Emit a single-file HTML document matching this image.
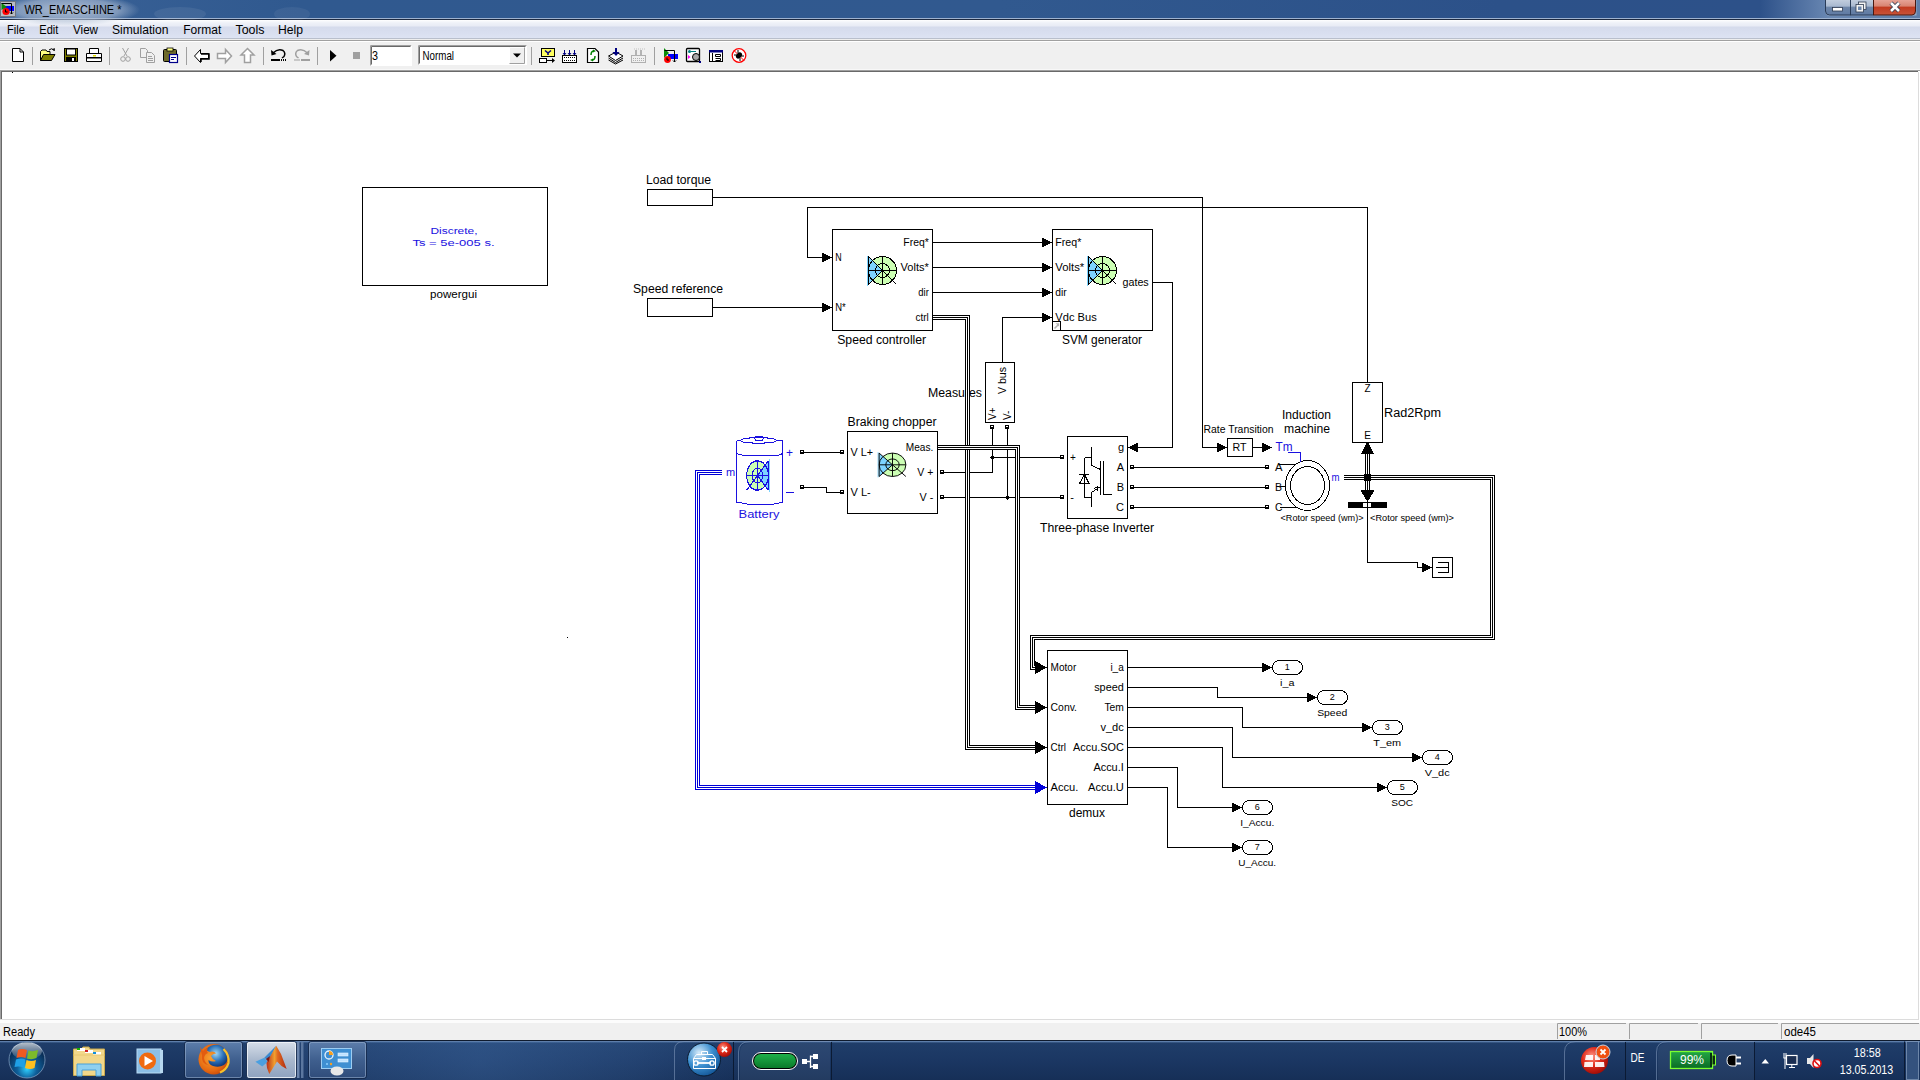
<!DOCTYPE html>
<html><head><meta charset="utf-8"><style>
html,body{margin:0;padding:0;width:1920px;height:1080px;overflow:hidden;background:#fff;font-family:"Liberation Sans", sans-serif;}
.a{position:absolute;}
svg text{font-family:"Liberation Sans", sans-serif;}
</style></head><body>
<!-- title bar -->
<div class="a" style="left:0;top:0;width:1920px;height:18px;background:linear-gradient(90deg,#3a6297 0px,#30598f 300px,#31598f 1000px,#2c5189 1500px,#2d5189 1760px,#6a88b3 1830px,#5f7faa 1920px);"></div>
<div class="a" style="left:0;top:18px;width:1920px;height:1px;background:#9fb3d0;"></div>
<div class="a" style="left:0;top:19px;width:1920px;height:1px;background:#1e2a40;"></div>
<!-- menu bar -->
<div class="a" style="left:0;top:20px;width:1920px;height:18px;background:linear-gradient(180deg,#ffffff 0px,#f8f9fc 1px,#eef1f8 3px,#e8ebf5 6px,#d5dbec 7px,#d8deef 12px,#dde3f3 18px);"></div>
<div class="a" style="left:0;top:38px;width:1920px;height:1px;background:#b9bfcc;"></div>
<div class="a" style="left:0;top:39px;width:1920px;height:1px;background:#eeeeee;"></div>
<div class="a" style="left:0;top:40px;width:1920px;height:1px;background:#a0a0a0;"></div>
<div class="a" style="left:0;top:41px;width:1920px;height:1px;background:#ffffff;"></div>
<!-- toolbar -->
<div class="a" style="left:0;top:42px;width:1920px;height:28px;background:#f0f0f0;"></div>
<div class="a" style="left:0;top:69px;width:1920px;height:1px;background:#f8f8f8;"></div>
<div class="a" style="left:0;top:70px;width:1920px;height:1px;background:#a0a0a0;"></div>
<div class="a" style="left:0;top:71px;width:1918px;height:1px;background:#696969;"></div>
<!-- canvas -->
<div class="a" style="left:0;top:71px;width:1px;height:949px;background:#a0a0a0;"></div>
<div class="a" style="left:1px;top:71px;width:1px;height:949px;background:#696969;"></div>
<div class="a" style="left:12px;top:72px;width:1px;height:1px;background:#000;"></div>
<div class="a" style="left:567px;top:637px;width:1px;height:1px;background:#000;"></div>
<div class="a" style="left:1918px;top:72px;width:1px;height:948px;background:#dcdcdc;"></div>
<div class="a" style="left:0;top:1019px;width:1919px;height:1px;background:#dcdcdc;"></div>
<!-- status bar -->
<div class="a" style="left:0;top:1020px;width:1920px;height:20px;background:#f0f0f0;"></div>
<div class="a" style="left:0;top:1020px;width:1920px;height:3px;background:#fcfcfc;"></div>
<!-- taskbar -->
<div class="a" style="left:0;top:1040px;width:1920px;height:40px;background:linear-gradient(180deg,#0f1b2e 0px,#0f1b2e 1px,#6f8fba 1px,#4a6c9a 2px,#1f3d69 3px,#1b3763 20px,#162f57 40px);"></div>
<svg class="a" style="left:0;top:0" width="1920" height="1080" shape-rendering="auto">
<defs>
<linearGradient id="gTitleGlow" x1="0" y1="0" x2="1" y2="0">
 <stop offset="0" stop-color="#fff" stop-opacity="0.45"/><stop offset="1" stop-color="#fff" stop-opacity="0"/>
</linearGradient>
<radialGradient id="gTitleGlowR" cx="0.5" cy="0.5" r="0.5">
 <stop offset="0" stop-color="#c4cfdf" stop-opacity="0.85"/><stop offset="0.7" stop-color="#b0bfd5" stop-opacity="0.6"/><stop offset="1" stop-color="#b0bfd5" stop-opacity="0"/>
</radialGradient>
<radialGradient id="gTaskGlow" cx="480" cy="1062" r="260" gradientUnits="userSpaceOnUse">
 <stop offset="0" stop-color="#4a7ab8" stop-opacity="0.35"/><stop offset="0.6" stop-color="#4a7ab8" stop-opacity="0.18"/><stop offset="1" stop-color="#4a7ab8" stop-opacity="0"/>
</radialGradient>
<linearGradient id="gBtn" x1="0" y1="0" x2="0" y2="1">
 <stop offset="0" stop-color="#c5d0e0"/><stop offset="0.45" stop-color="#a9b9d0"/><stop offset="0.5" stop-color="#6f87aa"/><stop offset="1" stop-color="#5f7aa3"/>
</linearGradient>
<linearGradient id="gClose" x1="0" y1="0" x2="0" y2="1">
 <stop offset="0" stop-color="#e8a89c"/><stop offset="0.45" stop-color="#d88472"/><stop offset="0.5" stop-color="#c23a20"/><stop offset="1" stop-color="#c8553a"/>
</linearGradient>
<linearGradient id="gTask" x1="0" y1="0" x2="0" y2="1">
 <stop offset="0" stop-color="#5d7eab"/><stop offset="0.5" stop-color="#3f5f8e"/><stop offset="1" stop-color="#2f4c7a"/>
</linearGradient>
<linearGradient id="gTaskAct" x1="0" y1="0" x2="0" y2="1">
 <stop offset="0" stop-color="#d7dfea"/><stop offset="0.5" stop-color="#a9b8cd"/><stop offset="1" stop-color="#8ea2bf"/>
</linearGradient>
<radialGradient id="gOrb" cx="0.5" cy="0.75" r="0.6">
 <stop offset="0" stop-color="#2fd0ff"/><stop offset="0.45" stop-color="#0e5f9a"/><stop offset="1" stop-color="#0a2d55"/>
</radialGradient>
<linearGradient id="gOrbTop" x1="0" y1="0" x2="0" y2="1">
 <stop offset="0" stop-color="#fff" stop-opacity="0.7"/><stop offset="1" stop-color="#fff" stop-opacity="0.05"/>
</linearGradient>
<radialGradient id="gFF" cx="0.45" cy="0.4" r="0.6">
 <stop offset="0" stop-color="#9fd8f5"/><stop offset="0.6" stop-color="#2a70b8"/><stop offset="1" stop-color="#123a7a"/>
</radialGradient>
<linearGradient id="gMat" x1="0" y1="0" x2="1" y2="0">
 <stop offset="0" stop-color="#b8301a"/><stop offset="0.4" stop-color="#f0a030"/><stop offset="0.55" stop-color="#e06a20"/><stop offset="1" stop-color="#b02a10"/>
</linearGradient>
<radialGradient id="gFFo" cx="0.4" cy="0.45" r="0.6">
 <stop offset="0" stop-color="#f8a030"/><stop offset="0.7" stop-color="#e66a12"/><stop offset="1" stop-color="#c84a0a"/>
</radialGradient>
<radialGradient id="gTool" cx="0.35" cy="0.3" r="0.8">
 <stop offset="0" stop-color="#d8ecfa"/><stop offset="0.5" stop-color="#3b8fd0"/><stop offset="1" stop-color="#0d4d8f"/>
</radialGradient>
<radialGradient id="gRed" cx="0.4" cy="0.35" r="0.7">
 <stop offset="0" stop-color="#ff9a8a"/><stop offset="0.5" stop-color="#e02a1a"/><stop offset="1" stop-color="#9a0a05"/>
</radialGradient>
<linearGradient id="gPill" x1="0" y1="0" x2="0" y2="1">
 <stop offset="0" stop-color="#1fb04a"/><stop offset="1" stop-color="#0a7a2a"/>
</linearGradient>
<linearGradient id="gBatt" x1="0" y1="0" x2="0" y2="1">
 <stop offset="0" stop-color="#23a845"/><stop offset="1" stop-color="#0b6a26"/>
</linearGradient>
</defs>
<ellipse cx="68" cy="10" rx="72" ry="16" fill="url(#gTitleGlowR)"/>
<ellipse cx="180" cy="14" rx="26" ry="7" fill="#fff" opacity="0.07"/><ellipse cx="292" cy="14" rx="18" ry="7" fill="#fff" opacity="0.06"/>
<rect x="0.5" y="1.5" width="15" height="15" fill="#b8bcc4" stroke="#6f757f"/>
<rect x="4" y="6" width="10" height="5" fill="#0000ff"/>
<polygon points="1.5,3 1.5,10 7,7" fill="#0a8a0a"/>
<path d="M1.5 3.5 H11.5 V14" stroke="#000" fill="none"/><path d="M10 12.5 L11.5 14 L13 12.5" stroke="#000" fill="none"/>
<circle cx="6" cy="11.5" r="3.6" fill="#ff0000"/><path d="M5.5 9.5 V12 H7.5" stroke="#000" fill="none"/>
<text x="24.5" y="14" font-size="12" fill="#000" text-anchor="start" font-weight="normal" textLength="97" lengthAdjust="spacingAndGlyphs" >WR_EMASCHINE *</text>
<path d="M1825.5 0 V12 Q1825.5 15.5 1829 15.5 H1916.5 Q1916.5 15.5 1916.5 12 V0" fill="#fff" opacity="0.35"/>
<path d="M1825.5 -1 V11 Q1825.5 15 1829.5 15 H1850.5 V-1 Z" fill="url(#gBtn)" stroke="#2a3c58"/>
<rect x="1850.5" y="-1" width="23" height="16" fill="url(#gBtn)" stroke="#2a3c58"/>
<path d="M1873.5 -1 V15 H1912 Q1915.5 15 1915.5 11 V-1 Z" fill="url(#gClose)" stroke="#4a1810"/>
<rect x="1832.5" y="7.5" width="10" height="3.5" fill="#fff" stroke="#2d3a50" stroke-width="0.8"/>
<rect x="1858.5" y="2" width="7.5" height="7.5" fill="#f4f4f4" stroke="#2d3a50" stroke-width="0.8"/>
<rect x="1856" y="4.5" width="7.5" height="7.5" fill="#f4f4f4" stroke="#2d3a50" stroke-width="0.8"/><rect x="1858" y="6.5" width="3.5" height="3.5" fill="#6d86aa"/>
<path d="M1891 3 L1899 11 M1899 3 L1891 11" stroke="#2d3a50" stroke-width="4.2"/><path d="M1891 3 L1899 11 M1899 3 L1891 11" stroke="#fff" stroke-width="2.6"/>
<text x="7" y="34" font-size="12" fill="#000" text-anchor="start" font-weight="normal" textLength="18" lengthAdjust="spacingAndGlyphs" >File</text>
<text x="39.3" y="34" font-size="12" fill="#000" text-anchor="start" font-weight="normal" textLength="19" lengthAdjust="spacingAndGlyphs" >Edit</text>
<text x="73" y="34" font-size="12" fill="#000" text-anchor="start" font-weight="normal" textLength="25" lengthAdjust="spacingAndGlyphs" >View</text>
<text x="112" y="34" font-size="12" fill="#000" text-anchor="start" font-weight="normal" textLength="56.5" lengthAdjust="spacingAndGlyphs" >Simulation</text>
<text x="183.3" y="34" font-size="12" fill="#000" text-anchor="start" font-weight="normal" textLength="38" lengthAdjust="spacingAndGlyphs" >Format</text>
<text x="235.5" y="34" font-size="12" fill="#000" text-anchor="start" font-weight="normal" textLength="29" lengthAdjust="spacingAndGlyphs" >Tools</text>
<text x="278" y="34" font-size="12" fill="#000" text-anchor="start" font-weight="normal" textLength="25" lengthAdjust="spacingAndGlyphs" >Help</text>
<rect x="32.0" y="47" width="1" height="18" fill="#a0a0a0"/>
<rect x="109.0" y="47" width="1" height="18" fill="#a0a0a0"/>
<rect x="186.0" y="47" width="1" height="18" fill="#a0a0a0"/>
<rect x="263.0" y="47" width="1" height="18" fill="#a0a0a0"/>
<rect x="317.0" y="47" width="1" height="18" fill="#a0a0a0"/>
<rect x="531.0" y="47" width="1" height="18" fill="#a0a0a0"/>
<rect x="654.0" y="47" width="1" height="18" fill="#a0a0a0"/>
<path d="M12.5 48.5 H20 L23.5 52 V61.5 H12.5 Z" fill="#fff" stroke="#000"/><path d="M20 48.5 V52 H23.5" fill="none" stroke="#000"/>
<path d="M40.5 60.5 V51.5 L42 50 H46 L47 51.5 H50 V54" fill="#ffff80" stroke="#000"/>
<polygon points="40.5,60.5 43.5,54.5 55,54.5 51.5,60.5" fill="#808000" stroke="#000"/>
<path d="M49 50 Q51.5 47.5 54 50" fill="none" stroke="#000"/><path d="M52.5 49.5 L54.5 50.5 L54 48" fill="none" stroke="#000"/>
<rect x="64.5" y="48.5" width="13" height="13" fill="#808000" stroke="#000"/><rect x="66.5" y="49" width="9" height="6" fill="#fff" stroke="#000"/><rect x="66" y="57" width="10" height="4.5" fill="#000"/><rect x="72" y="58" width="2" height="3" fill="#fff"/>
<path d="M89.5 48.5 H98.5 V53.5 H89.5 Z" fill="#fff" stroke="#000"/><path d="M86.5 53.5 H101.5 V61.5 H86.5 Z" fill="#fff" stroke="#000"/><rect x="87" y="57" width="14" height="1.5" fill="#000"/><rect x="93" y="55" width="3" height="1.5" fill="#e0e000"/>
<path d="M122.5 48 L127 56 M128.5 48 L124 56" stroke="#a0a0a0" fill="none"/><circle cx="123" cy="59" r="2.3" fill="none" stroke="#a0a0a0"/><circle cx="128" cy="59" r="2.3" fill="none" stroke="#a0a0a0"/>
<path d="M140.5 48.5 H145.5 L147.5 50.5 V57.5 H140.5 Z" fill="#f0f0f0" stroke="#a0a0a0"/><path d="M146.5 52.5 H151.5 L154.5 55.5 V62.5 H146.5 Z" fill="#f0f0f0" stroke="#a0a0a0"/><path d="M148 56.5 H152 M148 58.5 H153 M148 60.5 H153" stroke="#a0a0a0"/>
<rect x="163.5" y="49.5" width="13" height="12" rx="1" fill="#6e6a2a" stroke="#000"/><rect x="167" y="48" width="6" height="3" fill="#ffff80" stroke="#000" stroke-width="0.8"/><rect x="169.5" y="54.5" width="8" height="8" fill="#fff" stroke="#00008a" stroke-width="1.2"/><path d="M171 57.5 H176 M171 59.5 H174" stroke="#00008a"/>
<polygon points="194.5,56 200.5,49.5 200.5,53.5 208.5,53.5 208.5,58.5 200.5,58.5 200.5,62.5" fill="#fff" stroke="#000"/><path d="M201 54 H209 V59 H201 V62" stroke="#000" stroke-width="1.5" fill="none"/>
<polygon points="231.5,56 225.5,49.5 225.5,53.5 217.5,53.5 217.5,58.5 225.5,58.5 225.5,62.5" fill="#fff" stroke="#a0a0a0" stroke-width="1.5"/>
<polygon points="247.5,48.5 254,55 250.5,55 250.5,62.5 244.5,62.5 244.5,55 241,55" fill="#fff" stroke="#a0a0a0" stroke-width="1.5"/>
<path d="M273 53 Q278 48 283 50.5 Q286 53 284 56.5 L282 58" fill="none" stroke="#000" stroke-width="1.5"/><polygon points="271,50 271.5,55.5 276.5,54" fill="#000"/><rect x="271" y="59" width="9" height="2" fill="#000"/><path d="M281.5 59 V61 M283.5 59 V61 M285.5 59 V61" stroke="#000"/>
<path d="M307.5 53 Q302.5 48 297.5 50.5 Q294.5 53 296.5 56.5 L298.5 58" fill="none" stroke="#a0a0a0" stroke-width="1.5"/><polygon points="309.5,50 309,55.5 304,54" fill="#a0a0a0"/><rect x="301" y="59" width="9" height="2" fill="#a0a0a0"/><path d="M295 59 V61 M297 59 V61 M299 59 V61" stroke="#a0a0a0"/>
<polygon points="330,50 336.5,55.8 330,61.5" fill="#000"/>
<rect x="353" y="52" width="7" height="7" fill="#a0a0a0"/>
<rect x="370" y="45" width="42" height="21" fill="#fff"/><path d="M370.5 65.5 V45.5 H411.5" stroke="#a0a0a0" fill="none"/><path d="M371.5 64.5 V46.5 H410.5" stroke="#696969" fill="none"/><path d="M371 65.5 H411.5 V45.5" stroke="#fff" fill="none"/>
<text x="372" y="60" font-size="12" fill="#000" text-anchor="start" font-weight="normal" textLength="6" lengthAdjust="spacingAndGlyphs" >3</text>
<rect x="418" y="45" width="109" height="20" fill="#fff"/><path d="M418.5 64.5 V45.5 H526.5" stroke="#a0a0a0" fill="none"/><path d="M419.5 63.5 V46.5 H525.5" stroke="#696969" fill="none"/>
<rect x="509" y="47" width="16" height="17" fill="#f0f0f0"/><path d="M509.5 63.5 V47.5 H524.5" stroke="#fff" fill="none"/><path d="M509.5 63.5 H524.5 V47.5" stroke="#a0a0a0" fill="none"/><path d="M510 62.5 H523.5 V48" stroke="#fff" fill="none" opacity="0"/>
<polygon points="513,53.5 521,53.5 517,57.5" fill="#000"/>
<text x="422.5" y="60" font-size="12" fill="#000" text-anchor="start" font-weight="normal" textLength="31.5" lengthAdjust="spacingAndGlyphs" >Normal</text>
<rect x="541.5" y="48.5" width="13" height="8" fill="#ffff60" stroke="#000"/><path d="M545 50.5 L548 53 L551 50.5 M548 53 V55" stroke="#000080" stroke-width="1.6" fill="none"/><rect x="539.5" y="58.5" width="7" height="4" fill="#fff" stroke="#000"/><path d="M546.5 60.5 H554" stroke="#000"/><polygon points="552,58 555,60.5 552,63" fill="#000"/>
<rect x="562.5" y="55.5" width="14" height="7" fill="#fff" stroke="#000"/><path d="M564 57.5 H576 M564 60.5 H576" stroke="#000" stroke-dasharray="1 1"/><path d="M564.5 50 V55 M569.5 50 V55 M574.5 50 V55" stroke="#000080"/><path d="M563 53 L564.5 55 L566 53 M568 53 L569.5 55 L571 53 M573 53 L574.5 55 L576 53" stroke="#000080" fill="none"/>
<path d="M587.5 48.5 H595 L598.5 52 V62.5 H587.5 Z" fill="#fff" stroke="#000" stroke-width="1.2"/><path d="M591 55 Q591 51 594 51 M595 56 Q595 60 592 60" stroke="#008000" stroke-width="1.5" fill="none"/><polygon points="593,49.5 596,51 593,52.5" fill="#008000"/><polygon points="593,58.5 590,60 593,61.5" fill="#008000"/>
<path d="M608.5 56 L616 52 L623 56 L615.5 60.5 Z" fill="#fff" stroke="#000"/><path d="M608.5 58 L615.5 62.5 L623 58 M608.5 60 L615.5 64 L623 60" stroke="#000" fill="none"/><path d="M616 48 V54" stroke="#000080" stroke-width="2"/><polygon points="612.5,52 619.5,52 616,56" fill="#000080"/>
<rect x="631.5" y="55.5" width="14" height="7" fill="none" stroke="#b0b0b0"/><path d="M633 58.5 H645 M633 60.5 H645" stroke="#b0b0b0" stroke-dasharray="1 1"/><path d="M636 50 V55 M641 50 V55" stroke="#a0a0a0" stroke-width="1.5"/><path d="M634 49 H645" stroke="#c0c0c0" stroke-dasharray="1 1"/>
<polygon points="664,48 664,58 669,53" fill="#0a8a0a"/><rect x="668" y="54" width="10" height="5" fill="#0000ff"/><path d="M664.5 50.5 H674.5 V62" stroke="#000" fill="none"/><path d="M673 60.5 L674.5 62 L676 60.5" stroke="#000" fill="none"/><circle cx="667.5" cy="59.5" r="3.4" fill="#ff0000"/><path d="M667 57.5 V60 H669" stroke="#000" fill="none"/>
<rect x="686.5" y="48.5" width="13" height="13" rx="1" fill="#fff" stroke="#000" stroke-width="1.3"/><circle cx="689.5" cy="51.5" r="1.5" fill="#008080"/><path d="M691 51.5 H696" stroke="#008080"/><polygon points="688,55 688,59 690.5,57" fill="#ff00ff"/><circle cx="696" cy="57" r="3.5" fill="#a8a8a8" stroke="#000"/><rect x="699" y="61" width="2" height="2" fill="#000080"/>
<rect x="709.5" y="50.5" width="13" height="11" fill="#fff" stroke="#000"/><rect x="709" y="50" width="14" height="2.5" fill="#000080"/><path d="M712.5 53 V61 M715.5 54.5 H720.5 V56.5 H715.5 Z M715.5 58.5 H720.5 V60.5 H715.5" stroke="#000" fill="none"/>
<circle cx="739" cy="55.5" r="6.8" fill="#fff" stroke="#ff0000" stroke-width="1.3"/><path d="M734 50.5 L744 60.5" stroke="#ff0000"/><ellipse cx="739" cy="55.5" rx="2.5" ry="3.5" fill="#000" transform="rotate(45 739 55.5)"/><path d="M734 55 H737 M741 56 H744 M738 50 V53 M740 58 V61" stroke="#000"/>
<text x="3" y="1035.5" font-size="12" fill="#000" text-anchor="start" font-weight="normal" textLength="32" lengthAdjust="spacingAndGlyphs" >Ready</text>
<path d="M1557.5 1039 V1023.5 H1626 M1629.5 1039 V1023.5 H1698 M1701.5 1039 V1023.5 H1778 M1781.5 1039 V1023.5 H1919" stroke="#a0a0a0" fill="none"/>
<text x="1559" y="1035.5" font-size="12" fill="#000" text-anchor="start" font-weight="normal" textLength="28" lengthAdjust="spacingAndGlyphs" >100%</text>
<text x="1784" y="1035.5" font-size="12" fill="#000" text-anchor="start" font-weight="normal" textLength="32" lengthAdjust="spacingAndGlyphs" >ode45</text>
<rect x="0" y="1042" width="760" height="38" fill="url(#gTaskGlow)"/>
<circle cx="27" cy="1060" r="18" fill="url(#gOrb)" stroke="#8aa6c8" stroke-width="1" stroke-opacity="0.7"/>
<ellipse cx="27" cy="1051" rx="15" ry="8.5" fill="url(#gOrbTop)"/>
<path d="M18 1050 Q22 1048 27 1050 L25.5 1058 Q21 1056 16.5 1058 Z" fill="#f05a22"/>
<path d="M28.5 1050.5 Q33 1052 38 1050 L36.5 1058 Q32 1060 27 1058.5 Z" fill="#7cbb2a"/>
<path d="M16 1059.5 Q21 1057.5 25.5 1059.5 L24 1067.5 Q19 1066 14.5 1067 Z" fill="#1fa0e6"/>
<path d="M26.5 1060 Q31 1062 36 1060 L34.5 1068 Q30 1070 25 1068 Z" fill="#fcc020"/>
<path d="M73.5 1075.5 V1049 H81 L83 1047 H89 L90 1049 H104.5 V1075.5 Z" fill="#f2d78a" stroke="#c9a94c"/>
<rect x="77" y="1048" width="8" height="3" fill="#fff"/><rect x="77" y="1048" width="3" height="2" fill="#17b000"/><rect x="85" y="1050" width="8" height="3" fill="#fff"/><rect x="85" y="1050" width="3" height="2" fill="#d02020"/><rect x="93" y="1052" width="8" height="3" fill="#fff"/><rect x="93" y="1052" width="3" height="2" fill="#1090e0"/>
<path d="M73.5 1055 H104.5" stroke="#e8c870"/>
<path d="M77 1076 V1064 H101 V1076 H96 V1070 H82 V1076 Z" fill="#8fd0f0" stroke="#4aa0d8"/>
<rect x="137" y="1049" width="24" height="24" fill="#8cbfe6" stroke="#b9dcf5"/><rect x="160" y="1050" width="3" height="23" fill="#b7d8f0"/>
<circle cx="147.5" cy="1061" r="8.5" fill="#f06a10"/><polygon points="144.5,1056 153,1061 144.5,1066" fill="#fff"/>
<rect x="184.5" y="1041.5" width="58" height="37" rx="2.5" fill="url(#gTask)" stroke="#0f2345" stroke-opacity="0.8"/><rect x="185.5" y="1042.5" width="56" height="35" rx="2" fill="none" stroke="#9fb4d2" stroke-opacity="0.55"/>
<rect x="246.5" y="1041.5" width="50" height="37" rx="2.5" fill="url(#gTaskAct)" stroke="#0f2345" stroke-opacity="0.8"/><rect x="247.5" y="1042.5" width="48" height="35" rx="2" fill="none" stroke="#f4f7fb" stroke-opacity="0.8"/>
<rect x="297" y="1042" width="2.5" height="36" fill="#6c86ad"/><rect x="301" y="1042" width="2.5" height="36" fill="#5b779f"/>
<rect x="308.5" y="1041.5" width="58" height="37" rx="2.5" fill="url(#gTask)" stroke="#0f2345" stroke-opacity="0.8"/><rect x="309.5" y="1042.5" width="56" height="35" rx="2" fill="none" stroke="#9fb4d2" stroke-opacity="0.55"/>
<circle cx="213.8" cy="1059.2" r="15.3" fill="url(#gFFo)"/>
<path d="M206 1049 Q212 1043.5 219 1045 Q226 1047.5 227.5 1055 Q228.5 1062 224 1065 Q219 1068 213 1066 Q208 1064 208.5 1060 Q212 1062.5 216 1061 Q212 1059 211 1056 Q213 1053 216.5 1053.5 Q213 1050.5 210 1052 Q207 1051.5 206 1049 Z" fill="url(#gFF)"/>
<path d="M200 1047 L203 1051 Q205.5 1047.5 208 1048.5 Q206 1051 208 1053 Q204.5 1054 204 1058 Q204.5 1063 209 1065.5 Q205 1065 203 1062 Q201.5 1059 202 1055 Z" fill="#e25c10"/>
<path d="M223.5 1049 Q229.5 1055 228.5 1063 Q226.5 1070 220 1072.5" fill="none" stroke="#f7c02a" stroke-width="2.2"/>
<polygon points="255.4,1061.8 264.3,1057.7 267.9,1061.8 262.2,1066.5" fill="#4a9fe0"/>
<polygon points="264.3,1057.7 276.2,1045.7 268.5,1061" fill="#3a8ad0"/>
<polygon points="266.5,1063 276.2,1045.7 281,1054 286.7,1069.1 281.5,1066 277,1061.5 269.3,1074 267,1068" fill="url(#gMat)"/>
<polygon points="266,1059 270,1056 268.5,1062" fill="#7a1a1a"/>
<rect x="321.5" y="1048.5" width="30" height="20" fill="#3f8fd2" stroke="#9dcdf2"/>
<circle cx="329" cy="1055" r="4" fill="none" stroke="#e8f4ff" stroke-width="1.3"/><path d="M329 1051 A4 4 0 0 1 333 1055 L329 1055 Z" fill="#f8a020"/>
<rect x="338" y="1053" width="10" height="3" fill="#bfe2ff" stroke="#e8f4ff" stroke-width="0.6"/><rect x="338" y="1059" width="10" height="3" fill="#bfe2ff" stroke="#e8f4ff" stroke-width="0.6"/><circle cx="327" cy="1064" r="1" fill="#8fd0ff"/><circle cx="331" cy="1064" r="1.2" fill="#f8a020"/>
<ellipse cx="337" cy="1071" rx="6.5" ry="4.5" fill="#e8e8e8"/>
<path d="M674.5 1080 V1050 Q674.5 1041.5 684 1041.5 H733" fill="none" stroke="#7d95b8" stroke-opacity="0.6"/><path d="M733.5 1042 V1080" stroke="#0b1a33"/>
<circle cx="704" cy="1059.5" r="16.5" fill="url(#gTool)" stroke="#0a1a30" stroke-width="1"/>
<path d="M693.5 1068.5 V1058.5 H715.5 V1068.5 Z M693.5 1058.5 L696.5 1054.5 H712.5 L715.5 1058.5 M701.5 1054.5 V1051.5 H707.5 V1054.5" fill="none" stroke="#fff" stroke-width="1"/><rect x="702" y="1057" width="4" height="3" fill="#fff"/>
<path d="M697 1063 H711" stroke="#fff" stroke-width="1.8"/><circle cx="696" cy="1063" r="2.2" fill="none" stroke="#fff" stroke-width="1.3"/><circle cx="712" cy="1063" r="2.2" fill="none" stroke="#fff" stroke-width="1.3"/>
<circle cx="724.5" cy="1049.5" r="7.5" fill="url(#gRed)"/><path d="M722 1047 L727 1052 M727 1047 L722 1052" stroke="#fff" stroke-width="1.8"/>
<path d="M738.5 1080 V1052 Q738.5 1041.5 750 1041.5 H831" fill="none" stroke="#7d95b8" stroke-opacity="0.6"/><path d="M831.5 1042 V1080" stroke="#0b1a33"/>
<path d="M740 1080 V1052 Q740 1043 750 1043 H830 V1080 Z" fill="#fff" opacity="0.06"/>
<rect x="752.5" y="1052.5" width="45" height="17" rx="8.5" fill="#000" stroke="#fff" stroke-width="1"/><rect x="754" y="1054" width="42" height="14" rx="7" fill="url(#gPill)"/>
<rect x="802" y="1059" width="5" height="5" fill="#fff"/><rect x="813" y="1054" width="5" height="5" fill="#fff"/><rect x="813" y="1064" width="5" height="5" fill="#fff"/><path d="M807 1061.5 H810.5 M810.5 1055.5 V1068 M810.5 1056.5 H813 M810.5 1066.5 H813" stroke="#fff" stroke-width="1.3"/>
<path d="M1564.5 1080 V1052 Q1564.5 1041.5 1576 1041.5 H1625" fill="none" stroke="#7d95b8" stroke-opacity="0.6"/><path d="M1625.5 1042 V1080" stroke="#0b1a33"/>
<circle cx="1594.5" cy="1060.5" r="13.5" fill="url(#gRed)"/>
<path d="M1586 1055 H1593 V1060 H1585 Z M1595 1055 H1600 V1060 H1595 Z M1584.5 1062 H1593 V1067 H1584 Z M1595 1062 H1604 L1604.5 1067 H1595 Z" fill="#fff" opacity="0.92"/>
<circle cx="1603" cy="1052" r="7" fill="#f05010" stroke="#c8d4e4" stroke-width="1"/><path d="M1600.5 1049.5 L1605.5 1054.5 M1605.5 1049.5 L1600.5 1054.5" stroke="#fff" stroke-width="1.8"/>
<text x="1630.5" y="1062" font-size="12" fill="#fff" text-anchor="start" font-weight="normal" textLength="14" lengthAdjust="spacingAndGlyphs" >DE</text>
<path d="M1656.5 1080 V1052 Q1656.5 1041.5 1668 1041.5 H1754" fill="none" stroke="#7d95b8" stroke-opacity="0.6"/><path d="M1754.5 1042 V1080" stroke="#0b1a33"/>
<path d="M1658 1080 V1052 Q1658 1043 1668 1043 H1754 V1080 Z" fill="#fff" opacity="0.05"/>
<rect x="1670.5" y="1051.5" width="42" height="17" fill="url(#gBatt)" stroke="#7cff30" stroke-width="1.3"/><rect x="1712" y="1055" width="3.5" height="10" fill="#0a2a10" stroke="#7cff30" stroke-width="1"/><rect x="1710" y="1053" width="2" height="14" fill="#072e12"/>
<text x="1680" y="1064" font-size="12" fill="#fff" text-anchor="start" font-weight="normal" textLength="24" lengthAdjust="spacingAndGlyphs" >99%</text>
<path d="M1727 1060.5 Q1727 1055 1732 1055 H1736 V1066 H1732 Q1727 1066 1727 1060.5 Z" fill="#000" stroke="#fff" stroke-width="1"/><path d="M1736 1057.5 H1741 M1736 1063.5 H1741" stroke="#fff" stroke-width="1.8"/>
<polygon points="1761.5,1063.5 1765.3,1059 1769,1063.5" fill="#fff"/>
<rect x="1786.5" y="1055.5" width="10.5" height="9" fill="#1c2f52" stroke="#fff" stroke-width="1.2"/><path d="M1789 1067.5 H1795 M1791.8 1065 V1067.5" stroke="#fff"/><path d="M1784 1053 V1058 M1786 1053 V1058 M1783.5 1058 H1786.5 M1785 1058 V1069" stroke="#fff" stroke-width="1"/>
<polygon points="1807,1058 1810,1058 1813.5,1054 1813.5,1068 1810,1064 1807,1064" fill="#e8e8e8"/>
<circle cx="1817" cy="1063.5" r="4" fill="#fff" stroke="#e01010" stroke-width="1.6"/><path d="M1814.5 1061 L1819.5 1066" stroke="#e01010" stroke-width="1.6"/>
<text x="1867.3" y="1056.5" font-size="12" fill="#fff" text-anchor="middle" font-weight="normal" textLength="27" lengthAdjust="spacingAndGlyphs" >18:58</text>
<text x="1866.5" y="1073.5" font-size="12" fill="#fff" text-anchor="middle" font-weight="normal" textLength="53.5" lengthAdjust="spacingAndGlyphs" >13.05.2013</text>
<path d="M1904.5 1080 V1041.5" stroke="#0b1a33"/><rect x="1906.5" y="1041.5" width="12" height="38" fill="#34527e" stroke="#8aa2c2" stroke-opacity="0.7"/>
<g shape-rendering="crispEdges">
<rect x="362.5" y="187.5" width="185" height="98" fill="none" stroke="#000" stroke-width="1"/>
<text x="454" y="234.2" font-size="9.6" text-anchor="middle" fill="#1a10e0" textLength="47" lengthAdjust="spacingAndGlyphs" >Discrete,</text>
<text x="453.5" y="246" font-size="9.6" text-anchor="middle" fill="#1a10e0" textLength="82" lengthAdjust="spacingAndGlyphs" >Ts = 5e-005 s.</text>
<text x="453.5" y="297.5" font-size="11" text-anchor="middle" fill="#000" textLength="47" lengthAdjust="spacingAndGlyphs" >powergui</text>
<rect x="647.5" y="189.5" width="65" height="16" fill="none" stroke="#000" stroke-width="1"/>
<text x="646" y="184" font-size="12" text-anchor="start" fill="#000" textLength="65" lengthAdjust="spacingAndGlyphs" >Load torque</text>
<rect x="647.5" y="298.5" width="65" height="18" fill="none" stroke="#000" stroke-width="1"/>
<text x="633" y="293" font-size="12" text-anchor="start" fill="#000" textLength="90" lengthAdjust="spacingAndGlyphs" >Speed reference</text>
<rect x="832.5" y="229.5" width="100" height="101" fill="none" stroke="#000" stroke-width="1"/>
<text x="837.2" y="343.5" font-size="12" text-anchor="start" fill="#000" textLength="89" lengthAdjust="spacingAndGlyphs" >Speed controller</text>
<text x="928.8" y="246" font-size="11" text-anchor="end" fill="#000" textLength="25.5" lengthAdjust="spacingAndGlyphs" >Freq*</text>
<text x="928.8" y="271" font-size="11" text-anchor="end" fill="#000" textLength="28.3" lengthAdjust="spacingAndGlyphs" >Volts*</text>
<text x="928.8" y="296" font-size="11" text-anchor="end" fill="#000" textLength="10.5" lengthAdjust="spacingAndGlyphs" >dir</text>
<text x="928.8" y="321" font-size="11" text-anchor="end" fill="#000" textLength="13.3" lengthAdjust="spacingAndGlyphs" >ctrl</text>
<text x="835.3" y="261" font-size="11" text-anchor="start" fill="#000" textLength="6.4" lengthAdjust="spacingAndGlyphs" >N</text>
<text x="835.3" y="311" font-size="11" text-anchor="start" fill="#000" textLength="10.5" lengthAdjust="spacingAndGlyphs" >N*</text>
<g transform="translate(882.5,270.5) scale(1.0,1.0)"><circle cx="0" cy="0" r="14" fill="#ccffb4"/><polygon points="-14,-14 0,0 -14,14" fill="#7dd3ff"/><circle cx="0" cy="0" r="14" fill="none" stroke="#000" stroke-width="1"/><path d="M-15 -15 V15" stroke="#7dd3ff" stroke-width="1"/><circle cx="0" cy="0" r="7.0" fill="none" stroke="#000" stroke-width="1"/><path d="M0 -14 V14 M-14 0 H14 M-14 -14 L14 14 M-14 14 L0 0 M-14 -14 V14" stroke="#000" stroke-width="1" fill="none"/></g>
<rect x="1052.5" y="229.5" width="100" height="101" fill="none" stroke="#000" stroke-width="1"/>
<text x="1062" y="343.5" font-size="12" text-anchor="start" fill="#000" textLength="80" lengthAdjust="spacingAndGlyphs" >SVM generator</text>
<text x="1055.3" y="246" font-size="11" text-anchor="start" fill="#000" textLength="26" lengthAdjust="spacingAndGlyphs" >Freq*</text>
<text x="1055.3" y="271" font-size="11" text-anchor="start" fill="#000" textLength="28.9" lengthAdjust="spacingAndGlyphs" >Volts*</text>
<text x="1055.3" y="296" font-size="11" text-anchor="start" fill="#000" textLength="11.4" lengthAdjust="spacingAndGlyphs" >dir</text>
<text x="1055.3" y="321" font-size="11" text-anchor="start" fill="#000" textLength="41.4" lengthAdjust="spacingAndGlyphs" >Vdc Bus</text>
<text x="1148.7" y="286" font-size="11" text-anchor="end" fill="#000" textLength="26.2" lengthAdjust="spacingAndGlyphs" >gates</text>
<g transform="translate(1102.5,270.5) scale(1.0,1.0)"><circle cx="0" cy="0" r="14" fill="#ccffb4"/><polygon points="-14,-14 0,0 -14,14" fill="#7dd3ff"/><circle cx="0" cy="0" r="14" fill="none" stroke="#000" stroke-width="1"/><path d="M-15 -15 V15" stroke="#7dd3ff" stroke-width="1"/><circle cx="0" cy="0" r="7.0" fill="none" stroke="#000" stroke-width="1"/><path d="M0 -14 V14 M-14 0 H14 M-14 -14 L14 14 M-14 14 L0 0 M-14 -14 V14" stroke="#000" stroke-width="1" fill="none"/></g>
<rect x="1052.5" y="321.5" width="8" height="9" fill="#fff" stroke="#000" stroke-width="1"/>
<g shape-rendering="auto"><path d="M1054.5 328.5 L1058.5 324.5" stroke="#b4b4b4" stroke-width="1.6" fill="none"/><polygon points="1055.5,323.2 1059.2,323.2 1059.2,326.8" fill="#b4b4b4"/></g>
<path d="M712.5 197.5 L1202.5 197.5 L1202.5 447.5 L1217.5 447.5" fill="none" stroke="#000" stroke-width="1" stroke-linejoin="miter" stroke-linecap="square"/>
<rect x="1217" y="447" width="10" height="1" fill="#000"/>
<polygon points="1227,447.5 1217,442.7 1217,452.3" fill="#000"/>
<path d="M1367.5 382.5 L1367.5 207.5 L807.5 207.5 L807.5 257.5 L822.5 257.5" fill="none" stroke="#000" stroke-width="1" stroke-linejoin="miter" stroke-linecap="square"/>
<rect x="822" y="257" width="10" height="1" fill="#000"/>
<polygon points="832,257.5 822,252.7 822,262.3" fill="#000"/>
<path d="M712.5 307.5 L822.5 307.5" fill="none" stroke="#000" stroke-width="1" stroke-linejoin="miter" stroke-linecap="square"/>
<rect x="822" y="307" width="10" height="1" fill="#000"/>
<polygon points="832,307.5 822,302.7 822,312.3" fill="#000"/>
<path d="M932.5 242.5 L1042.5 242.5" fill="none" stroke="#000" stroke-width="1" stroke-linejoin="miter" stroke-linecap="square"/>
<rect x="1042" y="242" width="10" height="1" fill="#000"/>
<polygon points="1052,242.5 1042,237.7 1042,247.3" fill="#000"/>
<path d="M932.5 267.5 L1042.5 267.5" fill="none" stroke="#000" stroke-width="1" stroke-linejoin="miter" stroke-linecap="square"/>
<rect x="1042" y="267" width="10" height="1" fill="#000"/>
<polygon points="1052,267.5 1042,262.7 1042,272.3" fill="#000"/>
<path d="M932.5 292.5 L1042.5 292.5" fill="none" stroke="#000" stroke-width="1" stroke-linejoin="miter" stroke-linecap="square"/>
<rect x="1042" y="292" width="10" height="1" fill="#000"/>
<polygon points="1052,292.5 1042,287.7 1042,297.3" fill="#000"/>
<path d="M1002.5 362.5 L1002.5 317.5 L1042.5 317.5" fill="none" stroke="#000" stroke-width="1" stroke-linejoin="miter" stroke-linecap="square"/>
<rect x="1042" y="317" width="10" height="1" fill="#000"/>
<polygon points="1052,317.5 1042,312.7 1042,322.3" fill="#000"/>
<path d="M1152.5 282.5 L1172.5 282.5 L1172.5 447.5 L1138.5 447.5" fill="none" stroke="#000" stroke-width="1" stroke-linejoin="miter" stroke-linecap="square"/>
<rect x="1128" y="447" width="10" height="1" fill="#000"/>
<polygon points="1128,447.5 1138,442.7 1138,452.3" fill="#000"/>
<rect x="985.5" y="362.5" width="29" height="60" fill="none" stroke="#000" stroke-width="1"/>
<text transform="translate(1006,394) rotate(-90)" font-size="11" fill="#000" textLength="27" lengthAdjust="spacingAndGlyphs">V bus</text>
<text transform="translate(996,420) rotate(-90)" font-size="10" fill="#000">V+</text>
<text transform="translate(1011,420) rotate(-90)" font-size="10" fill="#000">V-</text>
<text x="928" y="397" font-size="12" text-anchor="start" fill="#000" textLength="54" lengthAdjust="spacingAndGlyphs" >Measures</text>
<rect x="847.5" y="431.5" width="90" height="82" fill="none" stroke="#000" stroke-width="1"/>
<text x="847.5" y="426" font-size="12" text-anchor="start" fill="#000" textLength="89" lengthAdjust="spacingAndGlyphs" >Braking chopper</text>
<text x="850.5" y="456" font-size="11" text-anchor="start" fill="#000" textLength="22.5" lengthAdjust="spacingAndGlyphs" >V L+</text>
<text x="850.5" y="496" font-size="11" text-anchor="start" fill="#000" textLength="20.3" lengthAdjust="spacingAndGlyphs" >V L-</text>
<text x="933.3" y="451" font-size="11" text-anchor="end" fill="#000" textLength="27.5" lengthAdjust="spacingAndGlyphs" >Meas.</text>
<text x="933.3" y="476" font-size="11" text-anchor="end" fill="#000" textLength="16.1" lengthAdjust="spacingAndGlyphs" >V +</text>
<text x="933.3" y="501" font-size="11" text-anchor="end" fill="#000" textLength="13.8" lengthAdjust="spacingAndGlyphs" >V -</text>
<g transform="translate(892.5,464.8) scale(1.0,0.875)"><circle cx="0" cy="0" r="13.4" fill="#ccffb4"/><polygon points="-13.4,-13.4 0,0 -13.4,13.4" fill="#7dd3ff"/><circle cx="0" cy="0" r="13.4" fill="none" stroke="#000" stroke-width="1"/><path d="M-14.4 -14.4 V14.4" stroke="#7dd3ff" stroke-width="1"/><circle cx="0" cy="0" r="6.7" fill="none" stroke="#000" stroke-width="1"/><path d="M0 -13.4 V13.4 M-13.4 0 H13.4 M-13.4 -13.4 L13.4 13.4 M-13.4 13.4 L0 0 M-13.4 -13.4 V13.4" stroke="#000" stroke-width="1" fill="none"/></g>
<path d="M802.5 452.5 L842.5 452.5" fill="none" stroke="#000" stroke-width="1" stroke-linejoin="miter" stroke-linecap="square"/>
<path d="M802.5 487.5 L826.5 487.5 L826.5 492.5 L842.5 492.5" fill="none" stroke="#000" stroke-width="1" stroke-linejoin="miter" stroke-linecap="square"/>
<rect x="800" y="450" width="4" height="4" fill="#000"/><rect x="801" y="451" width="2" height="1" fill="#fff"/>
<rect x="840" y="450" width="4" height="4" fill="#000"/><rect x="841" y="451" width="2" height="1" fill="#fff"/>
<rect x="800" y="485" width="4" height="4" fill="#000"/><rect x="801" y="486" width="2" height="1" fill="#fff"/>
<rect x="840" y="490" width="4" height="4" fill="#000"/><rect x="841" y="491" width="2" height="1" fill="#fff"/>
<path d="M942.5 472.5 L992.5 472.5 L992.5 427.5" fill="none" stroke="#000" stroke-width="1" stroke-linejoin="miter" stroke-linecap="square"/>
<path d="M992.5 457.5 L1062.5 457.5" fill="none" stroke="#000" stroke-width="1" stroke-linejoin="miter" stroke-linecap="square"/>
<path d="M942.5 497.5 L1062.5 497.5" fill="none" stroke="#000" stroke-width="1" stroke-linejoin="miter" stroke-linecap="square"/>
<path d="M1007.5 497.5 L1007.5 427.5" fill="none" stroke="#000" stroke-width="1" stroke-linejoin="miter" stroke-linecap="square"/>
<circle cx="992.5" cy="457.5" r="2.1" fill="#000"/>
<circle cx="1007.5" cy="497.5" r="2.1" fill="#000"/>
<rect x="940" y="470" width="4" height="4" fill="#000"/><rect x="941" y="471" width="2" height="1" fill="#fff"/>
<rect x="940" y="495" width="4" height="4" fill="#000"/><rect x="941" y="496" width="2" height="1" fill="#fff"/>
<rect x="990" y="425" width="4" height="4" fill="#000"/><rect x="991" y="426" width="2" height="1" fill="#fff"/>
<rect x="1005" y="425" width="4" height="4" fill="#000"/><rect x="1006" y="426" width="2" height="1" fill="#fff"/>
<rect x="1060" y="455" width="4" height="4" fill="#000"/><rect x="1061" y="456" width="2" height="1" fill="#fff"/>
<rect x="1060" y="495" width="4" height="4" fill="#000"/><rect x="1061" y="496" width="2" height="1" fill="#fff"/>
<rect x="1067.5" y="436.5" width="60" height="82" fill="none" stroke="#000" stroke-width="1"/>
<text x="1040" y="531.5" font-size="12" text-anchor="start" fill="#000" textLength="114" lengthAdjust="spacingAndGlyphs" >Three-phase Inverter</text>
<text x="1073" y="461" font-size="10" text-anchor="middle" fill="#000" >+</text>
<text x="1072" y="501" font-size="11" text-anchor="middle" fill="#000" >-</text>
<text x="1124" y="451" font-size="11" text-anchor="end" fill="#000" >g</text>
<text x="1124" y="471" font-size="11" text-anchor="end" fill="#000" >A</text>
<text x="1124" y="491" font-size="11" text-anchor="end" fill="#000" >B</text>
<text x="1124" y="511" font-size="11" text-anchor="end" fill="#000" >C</text>
<path d="M1091.5 447 V465.5 L1100.5 469.5 M1100.5 461 V494.5 M1103.5 461 V494.5 H1112 M1100.5 486.5 L1091.5 492.5 V507 M1084.5 457.5 H1091.5 M1084.5 457.5 V497.5 H1091.5 M1079 474.5 H1089 M1079 483.5 H1089 L1084.5 474.5 L1079.5 483.5 M1094.5 488.5 L1097.5 486.5 L1097 491" stroke="#000" stroke-width="1" fill="none"/>
<path d="M1132.5 467.5 L1267.5 467.5" fill="none" stroke="#000" stroke-width="1" stroke-linejoin="miter" stroke-linecap="square"/>
<rect x="1130" y="465" width="4" height="4" fill="#000"/><rect x="1131" y="466" width="2" height="1" fill="#fff"/>
<rect x="1265" y="465" width="4" height="4" fill="#000"/><rect x="1266" y="466" width="2" height="1" fill="#fff"/>
<path d="M1132.5 487.5 L1267.5 487.5" fill="none" stroke="#000" stroke-width="1" stroke-linejoin="miter" stroke-linecap="square"/>
<rect x="1130" y="485" width="4" height="4" fill="#000"/><rect x="1131" y="486" width="2" height="1" fill="#fff"/>
<rect x="1265" y="485" width="4" height="4" fill="#000"/><rect x="1266" y="486" width="2" height="1" fill="#fff"/>
<path d="M1132.5 507.5 L1267.5 507.5" fill="none" stroke="#000" stroke-width="1" stroke-linejoin="miter" stroke-linecap="square"/>
<rect x="1130" y="505" width="4" height="4" fill="#000"/><rect x="1131" y="506" width="2" height="1" fill="#fff"/>
<rect x="1265" y="505" width="4" height="4" fill="#000"/><rect x="1266" y="506" width="2" height="1" fill="#fff"/>
<rect x="1227.5" y="438.5" width="25" height="18" fill="none" stroke="#000" stroke-width="1"/>
<text x="1239.5" y="451" font-size="10" text-anchor="middle" fill="#000" textLength="14" lengthAdjust="spacingAndGlyphs" >RT</text>
<text x="1203.5" y="433" font-size="10" text-anchor="start" fill="#000" textLength="70" lengthAdjust="spacingAndGlyphs" >Rate Transition</text>
<path d="M1252.5 447.5 L1262.5 447.5" fill="none" stroke="#000" stroke-width="1" stroke-linejoin="miter" stroke-linecap="square"/>
<rect x="1262" y="447" width="10" height="1" fill="#000"/>
<polygon points="1272,447.5 1262,442.7 1262,452.3" fill="#000"/>
<text x="1275.5" y="451" font-size="12" text-anchor="start" fill="#1a10e0" textLength="17" lengthAdjust="spacingAndGlyphs" >Tm</text>
<text x="1306.5" y="418.5" font-size="12" text-anchor="middle" fill="#000" textLength="49" lengthAdjust="spacingAndGlyphs" >Induction</text>
<text x="1307" y="433" font-size="12" text-anchor="middle" fill="#000" textLength="46" lengthAdjust="spacingAndGlyphs" >machine</text>
<ellipse cx="1307.5" cy="485.5" rx="22" ry="25" fill="none" stroke="#000" stroke-width="1"/>
<ellipse cx="1307.5" cy="485.5" rx="17" ry="19" fill="none" stroke="#000" stroke-width="1"/>
<text x="1275" y="471" font-size="10.5" text-anchor="start" fill="#000" textLength="7.5" lengthAdjust="spacingAndGlyphs" >A</text>
<text x="1275" y="491" font-size="10.5" text-anchor="start" fill="#000" textLength="7" lengthAdjust="spacingAndGlyphs" >B</text>
<text x="1275" y="511" font-size="10.5" text-anchor="start" fill="#000" textLength="7.5" lengthAdjust="spacingAndGlyphs" >C</text>
<path d="M1279.5 464.5 L1295.5 464.5" fill="none" stroke="#000" stroke-width="1" stroke-linejoin="miter" stroke-linecap="square"/>
<path d="M1280.5 486.5 L1285.5 486.5" fill="none" stroke="#000" stroke-width="1" stroke-linejoin="miter" stroke-linecap="square"/>
<path d="M1280.5 507.5 L1296.5 507.5" fill="none" stroke="#000" stroke-width="1" stroke-linejoin="miter" stroke-linecap="square"/>
<path d="M1288.5 452.5 L1300.5 452.5 L1300.5 461.5" fill="none" stroke="#1a10e0" stroke-width="1" stroke-linejoin="miter" stroke-linecap="square"/>
<text x="1331.5" y="481" font-size="11" text-anchor="start" fill="#1a10e0" textLength="8" lengthAdjust="spacingAndGlyphs" >m</text>
<path d="M1343.5 477.5 L1492.5 477.5 L1492.5 637.5 L1032.5 637.5 L1032.5 667.5 L1036.5 667.5" fill="none" stroke="#000" stroke-width="5" stroke-linejoin="miter" stroke-linecap="butt"/>
<path d="M1343.5 477.5 L1492.5 477.5 L1492.5 637.5 L1032.5 637.5 L1032.5 667.5 L1036.5 667.5" fill="none" stroke="#fff" stroke-width="3" stroke-linejoin="miter" stroke-linecap="butt"/>
<path d="M1343.5 477.5 L1492.5 477.5 L1492.5 637.5 L1032.5 637.5 L1032.5 667.5 L1036.5 667.5" fill="none" stroke="#000" stroke-width="1" stroke-linejoin="miter" stroke-linecap="butt"/>
<rect x="1035" y="667" width="12" height="1" fill="#000"/>
<polygon points="1047,667.5 1035,661.0 1035,674.0" fill="#000"/>
<path d="M1367.5 453.5 L1367.5 491.5" fill="none" stroke="#000" stroke-width="5" stroke-linejoin="miter" stroke-linecap="butt"/>
<path d="M1367.5 453.5 L1367.5 491.5" fill="none" stroke="#fff" stroke-width="3" stroke-linejoin="miter" stroke-linecap="butt"/>
<path d="M1367.5 453.5 L1367.5 491.5" fill="none" stroke="#000" stroke-width="1" stroke-linejoin="miter" stroke-linecap="butt"/>
<polygon points="1367.5,441.5 1360.7,454.0 1374.3,454.0" fill="#000"/>
<polygon points="1367.5,501.8 1360.5,490.3 1374.5,490.3" fill="#000"/>
<rect x="1364" y="474" width="7" height="7" fill="#000"/>
<rect x="1348" y="502" width="39" height="6" fill="#000"/>
<rect x="1363" y="503" width="4" height="4" fill="#fff"/><rect x="1368" y="503" width="3" height="4" fill="#fff"/>
<text x="1322" y="521" font-size="9" text-anchor="middle" fill="#000" textLength="83" lengthAdjust="spacingAndGlyphs" >&lt;Rotor speed (wm)&gt;</text>
<text x="1412" y="521" font-size="9" text-anchor="middle" fill="#000" textLength="84" lengthAdjust="spacingAndGlyphs" >&lt;Rotor speed (wm)&gt;</text>
<path d="M1367.5 508.5 L1367.5 562.5 L1417.5 562.5 L1417.5 567.5 L1422.5 567.5" fill="none" stroke="#000" stroke-width="1" stroke-linejoin="miter" stroke-linecap="square"/>
<rect x="1422" y="567" width="10" height="1" fill="#000"/>
<polygon points="1432,567.5 1422,562.7 1422,572.3" fill="#000"/>
<rect x="1432.5" y="557.5" width="20" height="20" fill="none" stroke="#000" stroke-width="1"/>
<path d="M1438 562.5 H1448.5 V572.5 H1438 M1436 567.5 H1448.5" stroke="#000" stroke-width="1" fill="none"/>
<rect x="1352.5" y="382.5" width="30" height="60" fill="none" stroke="#000" stroke-width="1"/>
<text x="1367.5" y="392" font-size="10" text-anchor="middle" fill="#000" >Z</text>
<text x="1367.5" y="439" font-size="10" text-anchor="middle" fill="#000" >E</text>
<text x="1384" y="417" font-size="12" text-anchor="start" fill="#000" textLength="57" lengthAdjust="spacingAndGlyphs" >Rad2Rpm</text>
<path d="M736.5 440.5 V502.5 Q745 503 748 504.5 H771 Q779 503 782.5 502.5 V440.5" fill="none" stroke="#1a10e0" stroke-width="1"/>
<path d="M736.5 440.5 H740 L744 438.5 H748 L751 437.5 H766 L769 438.5 H773 L777 440.5 H782.5 M740 440.5 L744 442.5 H751 L754 443.5 H763 L766 442.5 H773 L777 440.5" fill="none" stroke="#1a10e0" stroke-width="1"/>
<path d="M754.5 438.5 V437.5 L756 436.5 H762 L763.5 437.5 V438.5 L762 440.5 H756 Z" fill="none" stroke="#1a10e0" stroke-width="1"/>
<path d="M736.5 453.5 Q745 456 748 455.5 H771 Q779 456 782.5 453.5" fill="none" stroke="#1a10e0" stroke-width="1"/>
<g transform="translate(757.5,475.5) scale(-1,1) scale(1.0,1.36)"><circle cx="0" cy="0" r="10.8" fill="#ccffb4"/><polygon points="-10.8,-10.8 0,0 -10.8,10.8" fill="#7dd3ff"/><circle cx="0" cy="0" r="10.8" fill="none" stroke="#1a10e0" stroke-width="1"/><path d="M-11.8 -11.8 V11.8" stroke="#7dd3ff" stroke-width="1"/><circle cx="0" cy="0" r="5.4" fill="none" stroke="#1a10e0" stroke-width="1"/><path d="M0 -10.8 V10.8 M-10.8 0 H10.8 M-10.8 -10.8 L10.8 10.8 M-10.8 10.8 L0 0 M-10.8 -10.8 V10.8" stroke="#1a10e0" stroke-width="1" fill="none"/></g>
<text x="789.5" y="456.5" font-size="12" text-anchor="middle" fill="#1a10e0" >+</text>
<path d="M786 492.5 H794" stroke="#1a10e0" stroke-width="1"/>
<text x="759" y="517.8" font-size="10.8" text-anchor="middle" fill="#1a10e0" textLength="41" lengthAdjust="spacingAndGlyphs" >Battery</text>
<text x="726" y="476" font-size="11" text-anchor="start" fill="#1a10e0" >m</text>
<path d="M721.5 472.5 L697.5 472.5 L697.5 787.5 L1036.5 787.5" fill="none" stroke="#0000d8" stroke-width="5" stroke-linejoin="miter" stroke-linecap="butt"/>
<path d="M721.5 472.5 L697.5 472.5 L697.5 787.5 L1036.5 787.5" fill="none" stroke="#fff" stroke-width="3" stroke-linejoin="miter" stroke-linecap="butt"/>
<path d="M721.5 472.5 L697.5 472.5 L697.5 787.5 L1036.5 787.5" fill="none" stroke="#0000d8" stroke-width="1" stroke-linejoin="miter" stroke-linecap="butt"/>
<rect x="1035" y="787" width="12" height="1" fill="#0000d8"/>
<polygon points="1047,787.5 1035,781.0 1035,794.0" fill="#0000d8"/>
<path d="M932.5 317.5 L967.5 317.5 L967.5 747.5 L1036.5 747.5" fill="none" stroke="#000" stroke-width="5" stroke-linejoin="miter" stroke-linecap="butt"/>
<path d="M932.5 317.5 L967.5 317.5 L967.5 747.5 L1036.5 747.5" fill="none" stroke="#fff" stroke-width="3" stroke-linejoin="miter" stroke-linecap="butt"/>
<path d="M932.5 317.5 L967.5 317.5 L967.5 747.5 L1036.5 747.5" fill="none" stroke="#000" stroke-width="1" stroke-linejoin="miter" stroke-linecap="butt"/>
<rect x="1035" y="747" width="12" height="1" fill="#000"/>
<polygon points="1047,747.5 1035,741.0 1035,754.0" fill="#000"/>
<path d="M937.5 447.5 L1017.5 447.5 L1017.5 707.5 L1036.5 707.5" fill="none" stroke="#000" stroke-width="5" stroke-linejoin="miter" stroke-linecap="butt"/>
<path d="M937.5 447.5 L1017.5 447.5 L1017.5 707.5 L1036.5 707.5" fill="none" stroke="#fff" stroke-width="3" stroke-linejoin="miter" stroke-linecap="butt"/>
<path d="M937.5 447.5 L1017.5 447.5 L1017.5 707.5 L1036.5 707.5" fill="none" stroke="#000" stroke-width="1" stroke-linejoin="miter" stroke-linecap="butt"/>
<rect x="1035" y="707" width="12" height="1" fill="#000"/>
<polygon points="1047,707.5 1035,701.0 1035,714.0" fill="#000"/>
<rect x="1047.5" y="650.5" width="80" height="154" fill="none" stroke="#000" stroke-width="1"/>
<text x="1087" y="817" font-size="12" text-anchor="middle" fill="#000" textLength="36" lengthAdjust="spacingAndGlyphs" >demux</text>
<text x="1050.6" y="671" font-size="11" text-anchor="start" fill="#000" textLength="25.7" lengthAdjust="spacingAndGlyphs" >Motor</text>
<text x="1050.6" y="711" font-size="11" text-anchor="start" fill="#000" textLength="26.4" lengthAdjust="spacingAndGlyphs" >Conv.</text>
<text x="1050.6" y="751" font-size="11" text-anchor="start" fill="#000" textLength="15.4" lengthAdjust="spacingAndGlyphs" >Ctrl</text>
<text x="1050.6" y="791" font-size="11" text-anchor="start" fill="#000" textLength="27.8" lengthAdjust="spacingAndGlyphs" >Accu.</text>
<text x="1123.8" y="671" font-size="11" text-anchor="end" fill="#000" textLength="13.4" lengthAdjust="spacingAndGlyphs" >i_a</text>
<text x="1123.8" y="691" font-size="11" text-anchor="end" fill="#000" textLength="29.6" lengthAdjust="spacingAndGlyphs" >speed</text>
<text x="1123.8" y="711" font-size="11" text-anchor="end" fill="#000" textLength="19.4" lengthAdjust="spacingAndGlyphs" >Tem</text>
<text x="1123.8" y="731" font-size="11" text-anchor="end" fill="#000" textLength="23.4" lengthAdjust="spacingAndGlyphs" >v_dc</text>
<text x="1123.8" y="751" font-size="11" text-anchor="end" fill="#000" textLength="50.7" lengthAdjust="spacingAndGlyphs" >Accu.SOC</text>
<text x="1123.8" y="771" font-size="11" text-anchor="end" fill="#000" textLength="30.4" lengthAdjust="spacingAndGlyphs" >Accu.I</text>
<text x="1123.8" y="791" font-size="11" text-anchor="end" fill="#000" textLength="35.8" lengthAdjust="spacingAndGlyphs" >Accu.U</text>
<path d="M1127.5 667.5 L1262.5 667.5" fill="none" stroke="#000" stroke-width="1" stroke-linejoin="miter" stroke-linecap="square"/>
<rect x="1262" y="667" width="10" height="1" fill="#000"/>
<polygon points="1272,667.5 1262,662.7 1262,672.3" fill="#000"/>
<rect x="1272.5" y="660.5" width="30" height="14" rx="7" ry="7" fill="#fff" stroke="#000" stroke-width="1"/>
<text x="1287.2" y="670.2" font-size="9" text-anchor="middle" fill="#000" >1</text>
<text x="1287.2" y="686" font-size="9.5" text-anchor="middle" fill="#000" textLength="14.4" lengthAdjust="spacingAndGlyphs" >i_a</text>
<path d="M1127.5 687.5 L1217.5 687.5 L1217.5 697.5 L1307.5 697.5" fill="none" stroke="#000" stroke-width="1" stroke-linejoin="miter" stroke-linecap="square"/>
<rect x="1307" y="697" width="10" height="1" fill="#000"/>
<polygon points="1317,697.5 1307,692.7 1307,702.3" fill="#000"/>
<rect x="1317.5" y="690.5" width="30" height="14" rx="7" ry="7" fill="#fff" stroke="#000" stroke-width="1"/>
<text x="1332.2" y="700.2" font-size="9" text-anchor="middle" fill="#000" >2</text>
<text x="1332.2" y="716" font-size="9.5" text-anchor="middle" fill="#000" textLength="30" lengthAdjust="spacingAndGlyphs" >Speed</text>
<path d="M1127.5 707.5 L1242.5 707.5 L1242.5 727.5 L1362.5 727.5" fill="none" stroke="#000" stroke-width="1" stroke-linejoin="miter" stroke-linecap="square"/>
<rect x="1362" y="727" width="10" height="1" fill="#000"/>
<polygon points="1372,727.5 1362,722.7 1362,732.3" fill="#000"/>
<rect x="1372.5" y="720.5" width="30" height="14" rx="7" ry="7" fill="#fff" stroke="#000" stroke-width="1"/>
<text x="1387.2" y="730.2" font-size="9" text-anchor="middle" fill="#000" >3</text>
<text x="1387.2" y="746" font-size="9.5" text-anchor="middle" fill="#000" textLength="27.8" lengthAdjust="spacingAndGlyphs" >T_em</text>
<path d="M1127.5 727.5 L1232.5 727.5 L1232.5 757.5 L1412.5 757.5" fill="none" stroke="#000" stroke-width="1" stroke-linejoin="miter" stroke-linecap="square"/>
<rect x="1412" y="757" width="10" height="1" fill="#000"/>
<polygon points="1422,757.5 1412,752.7 1412,762.3" fill="#000"/>
<rect x="1422.5" y="750.5" width="30" height="14" rx="7" ry="7" fill="#fff" stroke="#000" stroke-width="1"/>
<text x="1437.2" y="760.2" font-size="9" text-anchor="middle" fill="#000" >4</text>
<text x="1437.2" y="776" font-size="9.5" text-anchor="middle" fill="#000" textLength="25" lengthAdjust="spacingAndGlyphs" >V_dc</text>
<path d="M1127.5 747.5 L1222.5 747.5 L1222.5 787.5 L1377.5 787.5" fill="none" stroke="#000" stroke-width="1" stroke-linejoin="miter" stroke-linecap="square"/>
<rect x="1377" y="787" width="10" height="1" fill="#000"/>
<polygon points="1387,787.5 1377,782.7 1377,792.3" fill="#000"/>
<rect x="1387.5" y="780.5" width="30" height="14" rx="7" ry="7" fill="#fff" stroke="#000" stroke-width="1"/>
<text x="1402.2" y="790.2" font-size="9" text-anchor="middle" fill="#000" >5</text>
<text x="1402.2" y="806" font-size="9.5" text-anchor="middle" fill="#000" textLength="21.8" lengthAdjust="spacingAndGlyphs" >SOC</text>
<path d="M1127.5 767.5 L1177.5 767.5 L1177.5 807.5 L1232.5 807.5" fill="none" stroke="#000" stroke-width="1" stroke-linejoin="miter" stroke-linecap="square"/>
<rect x="1232" y="807" width="10" height="1" fill="#000"/>
<polygon points="1242,807.5 1232,802.7 1232,812.3" fill="#000"/>
<rect x="1242.5" y="800.5" width="30" height="14" rx="7" ry="7" fill="#fff" stroke="#000" stroke-width="1"/>
<text x="1257.2" y="810.2" font-size="9" text-anchor="middle" fill="#000" >6</text>
<text x="1257.2" y="826" font-size="9.5" text-anchor="middle" fill="#000" textLength="34.1" lengthAdjust="spacingAndGlyphs" >I_Accu.</text>
<path d="M1127.5 787.5 L1167.5 787.5 L1167.5 847.5 L1232.5 847.5" fill="none" stroke="#000" stroke-width="1" stroke-linejoin="miter" stroke-linecap="square"/>
<rect x="1232" y="847" width="10" height="1" fill="#000"/>
<polygon points="1242,847.5 1232,842.7 1232,852.3" fill="#000"/>
<rect x="1242.5" y="840.5" width="30" height="14" rx="7" ry="7" fill="#fff" stroke="#000" stroke-width="1"/>
<text x="1257.2" y="850.2" font-size="9" text-anchor="middle" fill="#000" >7</text>
<text x="1257.2" y="866" font-size="9.5" text-anchor="middle" fill="#000" textLength="37.8" lengthAdjust="spacingAndGlyphs" >U_Accu.</text>
</g>
</svg>
</body></html>
